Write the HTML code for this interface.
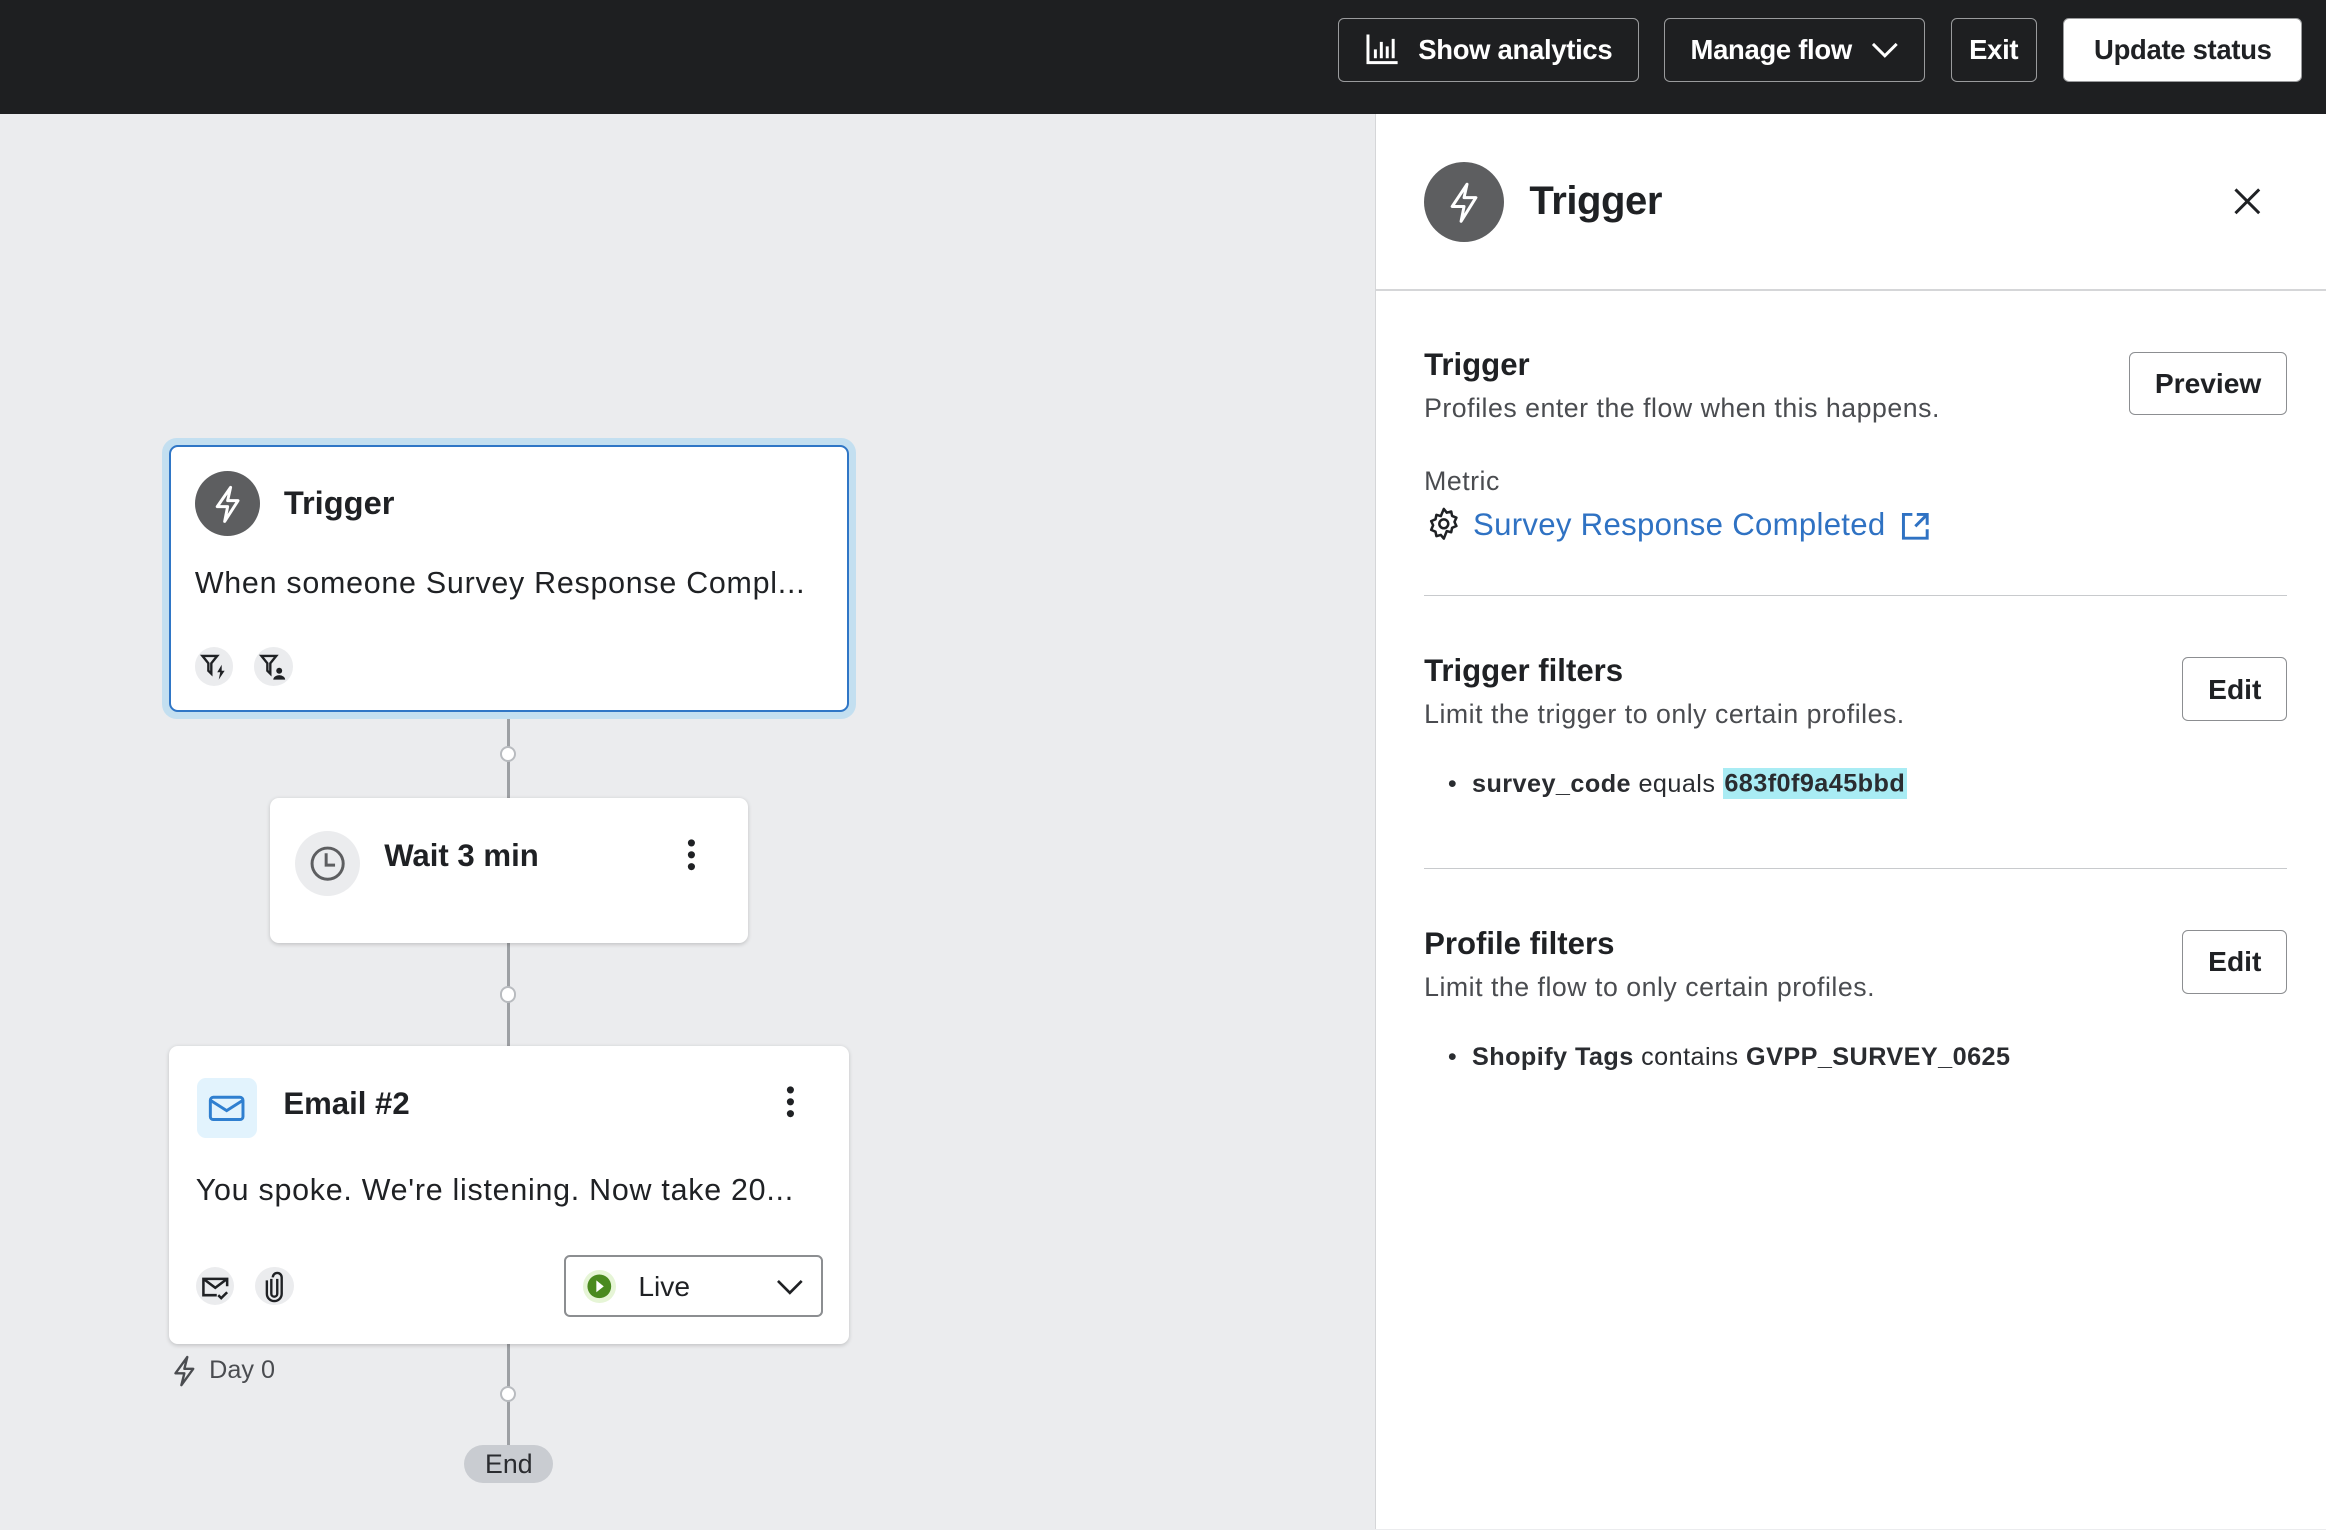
<!DOCTYPE html>
<html><head><meta charset="utf-8"><style>
*{box-sizing:border-box;margin:0;padding:0}
html,body{width:2326px;height:1530px;overflow:hidden;background:#ebecee}
#w{zoom:1.48342;width:1568px;height:1031px;position:relative;font-family:"Liberation Sans",sans-serif;color:#1f2124}
.abs{position:absolute;white-space:nowrap}
.top{left:0;top:0;width:1568px;height:77px;background:#1e1f21}
.tb{position:absolute;top:12px;height:43px;border:1px solid #9a9b9d;border-radius:4px;color:#fff;font-size:18.5px;font-weight:bold;display:flex;align-items:center;justify-content:center;white-space:nowrap;letter-spacing:-0.2px}
.card{position:absolute;background:#fff;border-radius:6px;box-shadow:0 1px 3px rgba(0,0,0,.18)}
.line{position:absolute;left:342px;width:1.5px;background:#9da0a4}
.dot{position:absolute;left:337px;width:11px;height:11px;border-radius:50%;background:#fff;border:1.5px solid #b8bbbf}
.pill{position:absolute;width:26px;height:26px;border-radius:50%;background:#ebecee}
.panel{left:927px;top:77px;width:641px;height:954px;background:#fff;border-left:1px solid #d5d6d8}
.btn{position:absolute;border:1px solid #8c8e91;border-radius:4px;background:#fff;font-size:19px;font-weight:bold;display:flex;align-items:center;justify-content:center}
.h{position:absolute;font-size:21px;font-weight:bold}
.s{position:absolute;font-size:18px;color:#4a4c50;letter-spacing:0.35px;white-space:nowrap}
.hr{position:absolute;left:960px;width:582px;height:1px;background:#c8cacd}
.b{position:absolute;font-size:17px;color:#2a2c30;white-space:nowrap;letter-spacing:0.3px}
</style></head><body><div id="w">
<div class="abs top"></div>
<div class="tb" style="left:902px;width:203px"><svg width="24" height="22" viewBox="0 0 24 22" style="margin-right:12px"><path d="M2 1v19h20M7 11v6M11 6v11M15 9v8M19 4v13" stroke="#fff" stroke-width="2" fill="none"/></svg>Show analytics</div>
<div class="tb" style="left:1122px;width:176px">Manage flow<svg width="20" height="12" viewBox="0 0 20 12" style="margin-left:12px"><path d="M2 2l8 8 8-8" stroke="#fff" stroke-width="2" fill="none"/></svg></div>
<div class="tb" style="left:1315px;width:58px">Exit</div>
<div class="tb" style="left:1391px;width:161px;background:#fff;color:#1f2124">Update status</div>

<div class="line" style="top:480px;height:58px"></div>
<div class="dot" style="top:503px"></div>
<div class="line" style="top:636px;height:70px"></div>
<div class="dot" style="top:665px"></div>
<div class="line" style="top:906px;height:70px"></div>
<div class="dot" style="top:934px"></div>

<div class="abs" style="left:109px;top:295px;width:468px;height:190px;border-radius:10px;background:#c3dff0"></div>
<div class="card" style="left:114px;top:300px;width:458px;height:180px;border:2px solid #2f76c6;box-shadow:none">
 <div class="abs" style="left:16px;top:16px;width:44px;height:44px;border-radius:50%;background:#5d5e60"><svg width="44" height="44" viewBox="0 0 44 44"><path d="M24 11l-9 13h7l-2 10 9-14h-7z" stroke="#fff" stroke-width="2" fill="none" stroke-linejoin="round"/></svg></div>
 <div class="abs" style="left:76px;top:25px;font-size:22px;font-weight:bold">Trigger</div>
 <div class="abs" style="left:16px;top:80px;font-size:20.5px;letter-spacing:0.5px">When someone Survey Response Compl...</div>
 <div class="pill" style="left:16px;top:135px"><svg width="26" height="26" viewBox="0 0 26 26"><path d="M5 6h10l-4 5v7l-2-2v-5z" stroke="#1f2124" stroke-width="1.6" fill="none"/><path d="M18 12l-3 5h2l-1 5 4-6h-2z" fill="#1f2124"/></svg></div>
 <div class="pill" style="left:56px;top:135px"><svg width="26" height="26" viewBox="0 0 26 26"><path d="M5 6h10l-4 5v7l-2-2v-5z" stroke="#1f2124" stroke-width="1.6" fill="none"/><circle cx="17" cy="16" r="2" fill="#1f2124"/><path d="M13 22a4 3 0 0 1 8 0z" fill="#1f2124"/></svg></div>
</div>

<div class="card" style="left:182px;top:538px;width:322px;height:98px">
 <div class="abs" style="left:17px;top:22px;width:44px;height:44px;border-radius:50%;background:#ebecee"><svg width="44" height="44" viewBox="0 0 44 44"><circle cx="22" cy="22" r="10.5" stroke="#5d5e60" stroke-width="2" fill="none"/><path d="M21 15v8h6" stroke="#5d5e60" stroke-width="2" fill="none"/></svg></div>
 <div class="abs" style="left:77px;top:27px;font-size:21px;font-weight:bold">Wait 3 min</div>
 <svg class="abs" style="left:279px;top:26px" width="10" height="26"><circle cx="5" cy="4" r="2.4" fill="#1f2124"/><circle cx="5" cy="12" r="2.4" fill="#1f2124"/><circle cx="5" cy="20" r="2.4" fill="#1f2124"/></svg>
</div>

<div class="card" style="left:114px;top:705px;width:458px;height:201px">
 <div class="abs" style="left:19px;top:22px;width:40px;height:40px;border-radius:6px;background:#e2f3fd"><svg width="40" height="40" viewBox="0 0 40 40"><rect x="9" y="13" width="22" height="15" rx="2" stroke="#2f7fd0" stroke-width="2" fill="none"/><path d="M9 15l11 7 11-7" stroke="#2f7fd0" stroke-width="2" fill="none"/></svg></div>
 <div class="abs" style="left:77px;top:27px;font-size:21px;font-weight:bold">Email #2</div>
 <svg class="abs" style="left:414px;top:26px" width="10" height="26"><circle cx="5" cy="4" r="2.4" fill="#1f2124"/><circle cx="5" cy="12" r="2.4" fill="#1f2124"/><circle cx="5" cy="20" r="2.4" fill="#1f2124"/></svg>
 <div class="abs" style="left:18px;top:86px;font-size:20.5px;letter-spacing:0.5px">You spoke. We're listening. Now take 20...</div>
 <div class="pill" style="left:18px;top:149px"><svg width="26" height="26" viewBox="0 0 26 26"><path d="M14 19H5V8h16v5M5 8l8 6 8-6" stroke="#1f2124" stroke-width="1.7" fill="none"/><path d="M15 19l2 2 4-4" stroke="#1f2124" stroke-width="1.7" fill="none"/></svg></div>
 <div class="pill" style="left:58px;top:149px"><svg width="26" height="26" viewBox="0 0 26 26"><path d="M11 8v10a2 2 0 0 0 4 0V8M8 9v9a5 5 0 0 0 10 0V7a3 3 0 0 0-6 0" stroke="#1f2124" stroke-width="1.6" fill="none"/></svg></div>
 <div class="abs" style="left:266px;top:141px;width:175px;height:42px;border:1.5px solid #8c8e91;border-radius:4px">
  <div class="abs" style="left:12px;top:9px;width:22px;height:22px;border-radius:50%;background:#e6f5d6"><svg width="22" height="22"><circle cx="11" cy="11" r="8" fill="#4a8a1f"/><path d="M9 7l5 4-5 4z" fill="#fff"/></svg></div>
  <div class="abs" style="left:49px;top:9px;font-size:19px">Live</div>
  <svg class="abs" style="left:141px;top:14px" width="20" height="12"><path d="M2 2l8 8 8-8" stroke="#1f2124" stroke-width="1.8" fill="none"/></svg>
 </div>
</div>
<svg class="abs" style="left:115px;top:913px" width="20" height="22"><path d="M11 2L3 13h6l-2 8 8-11H9z" stroke="#4a4c50" stroke-width="1.6" fill="none" stroke-linejoin="round"/></svg>
<div class="abs" style="left:141px;top:914px;font-size:17px;color:#4a4c50">Day 0</div>
<div class="abs" style="left:313px;top:974px;width:60px;height:26px;border-radius:13px;background:#c9ccd1;font-size:18px;text-align:center;line-height:26px;color:#2a2c30">End</div>

<div class="abs panel"></div>
<div class="abs" style="left:960px;top:109px;width:54px;height:54px;border-radius:50%;background:#5d5e60"><svg width="54" height="54" viewBox="0 0 54 54"><path d="M29 15l-10 15h8l-2 10 10-16h-8z" stroke="#fff" stroke-width="2" fill="none" stroke-linejoin="round"/></svg></div>
<div class="abs" style="left:1031px;top:121px;font-size:27px;font-weight:bold;color:#1f2124;letter-spacing:-0.3px">Trigger</div>
<svg class="abs" style="left:1504px;top:125px" width="22" height="22"><path d="M3 3l16 16M19 3L3 19" stroke="#1f2124" stroke-width="2"/></svg>
<div class="abs" style="left:927px;top:195px;width:641px;height:1px;background:#d5d6d8"></div>

<div class="h" style="left:960px;top:234px">Trigger</div>
<div class="s" style="left:960px;top:265px">Profiles enter the flow when this happens.</div>
<div class="btn" style="left:1435px;top:237px;width:107px;height:43px">Preview</div>
<div class="s" style="left:960px;top:314px">Metric</div>
<svg class="abs" style="left:961px;top:341px" width="24" height="24" viewBox="0 0 24 24"><path d="M12 2l2 2.5 3-.8.6 3 2.9 1.2-1.3 2.8 1.3 2.8-2.9 1.2-.6 3-3-.8L12 22l-2-2.5-3 .8-.6-3-2.9-1.2L4.8 13 3.5 10.2l2.9-1.2.6-3 3 .8z" stroke="#1f2124" stroke-width="1.7" fill="none" stroke-linejoin="round"/><circle cx="12" cy="12" r="3" stroke="#1f2124" stroke-width="1.7" fill="none"/></svg>
<div class="abs" style="left:993px;top:342px;font-size:21px;color:#2f72c3;letter-spacing:0.2px">Survey Response Completed</div>
<svg class="abs" style="left:1280px;top:344px" width="22" height="22"><path d="M9 3H3v16h16v-6M12 3h7v7M19 3l-8 8" stroke="#2f72c3" stroke-width="2" fill="none"/></svg>
<div class="hr" style="top:401px"></div>

<div class="h" style="left:960px;top:440px">Trigger filters</div>
<div class="s" style="left:960px;top:471px">Limit the trigger to only certain profiles.</div>
<div class="btn" style="left:1471px;top:443px;width:71px;height:43px">Edit</div>
<div class="b" style="left:976px;top:519px">•&nbsp;&nbsp;<b>survey_code</b> equals <b style="background:#a9ecf4;padding:1px 1px">683f0f9a45bbd</b></div>
<div class="hr" style="top:585px"></div>

<div class="h" style="left:960px;top:624px">Profile filters</div>
<div class="s" style="left:960px;top:655px">Limit the flow to only certain profiles.</div>
<div class="btn" style="left:1471px;top:627px;width:71px;height:43px">Edit</div>
<div class="b" style="left:976px;top:703px">•&nbsp;&nbsp;<b>Shopify Tags</b> contains <b>GVPP_SURVEY_0625</b></div>
</div></body></html>
